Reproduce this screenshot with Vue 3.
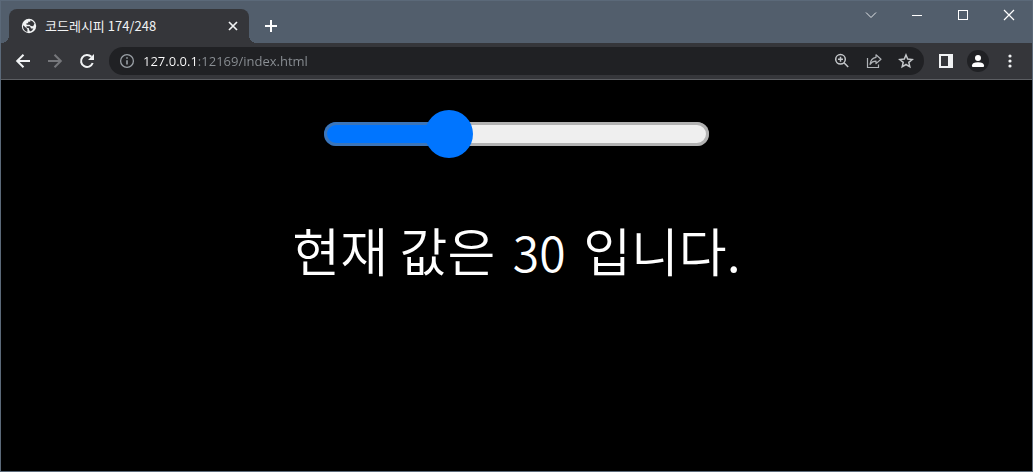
<script setup>
import { ref, computed } from 'vue'

const tabTitle = ref('코드레시피 174/248')
const address = ref('127.0.0.1:12169/index.html')
const value = ref(30)
const fill = computed(() => ({ '--ratio': value.value / 100 }))
</script>

<template>
  <div class="window">
    <header class="titlebar">
      <div class="tab">
        <svg class="globe" width="16" height="16" viewBox="0 0 16 16" aria-hidden="true">
          <circle cx="8" cy="8" r="7.2" fill="#f1f3f4" />
          <path d="M2.2 7.2 L6.4 11 V14 Q2.2 12.8 2 8.5 Z M9.4 2.3 Q12.4 3 13.5 5.6 L12.2 8.2 L9.8 8 L8.6 6.8 H5.6 L5.4 5.2 H7.2 V3.8 H9.2 Z M5.4 8.2 H9 L10 10.4 H12.4 Q11.4 12.6 9 13.5 L8 11.6 V10.2 L5.6 9.8 Z" fill="#35363a" />
        </svg>
        <span class="tab-title">{{ tabTitle }}</span>
        <button class="icon-button tab-close" type="button" aria-label="탭 닫기">
          <svg width="16" height="16" viewBox="0 0 16 16"><path d="M4 4 L12 12 M12 4 L4 12" stroke="#f1f3f4" stroke-width="1.7" /></svg>
        </button>
      </div>
      <button class="icon-button new-tab" type="button" aria-label="새 탭">
        <svg width="16" height="16" viewBox="0 0 16 16"><path d="M2 8 H14 M8 2 V14" stroke="#fff" stroke-width="2" /></svg>
      </button>
      <div class="controls">
        <button class="icon-button" type="button" aria-label="탭 검색">
          <svg width="12" height="12" viewBox="0 0 12 12"><path d="M1 3.5 L6 8.5 L11 3.5" fill="none" stroke="#e4e7ea" /></svg>
        </button>
        <button class="icon-button" type="button" aria-label="최소화">
          <svg width="12" height="12" viewBox="0 0 12 12"><path d="M1 6.5 H11" stroke="#fff" /></svg>
        </button>
        <button class="icon-button" type="button" aria-label="최대화">
          <svg width="12" height="12" viewBox="0 0 12 12"><rect x="1.5" y="1.5" width="9" height="9" fill="none" stroke="#fff" /></svg>
        </button>
        <button class="icon-button" type="button" aria-label="닫기">
          <svg width="12" height="12" viewBox="0 0 12 12"><path d="M1 1 L11 11 M11 1 L1 11" stroke="#fff" stroke-width="1.2" /></svg>
        </button>
      </div>
    </header>

    <nav class="toolbar">
      <button class="icon-button tool" type="button" aria-label="뒤로">
        <svg width="16" height="16" viewBox="0 0 16 16"><path d="M15 8 H2.5 M8.5 1.7 L2.2 8 L8.5 14.3" fill="none" stroke="#f1f3f4" stroke-width="2" /></svg>
      </button>
      <button class="icon-button tool" type="button" aria-label="앞으로">
        <svg width="16" height="16" viewBox="0 0 16 16"><path d="M1 8 H13.5 M7.5 1.7 L13.8 8 L7.5 14.3" fill="none" stroke="#76777b" stroke-width="2" /></svg>
      </button>
      <button class="icon-button tool" type="button" aria-label="새로고침">
        <svg width="16" height="16" viewBox="0 0 16 16"><path d="M13.7 10 A6 6 0 1 1 12.4 3.8" fill="none" stroke="#f1f3f4" stroke-width="2" /><path d="M15 1 V7 H9 Z" fill="#f1f3f4" /></svg>
      </button>
      <div class="omnibox">
        <button class="icon-button info" type="button" aria-label="사이트 정보">
          <svg width="16" height="16" viewBox="0 0 16 16"><circle cx="8" cy="8" r="6.4" fill="none" stroke="#9aa0a6" stroke-width="1.3" /><path d="M8 7.2 V11.5 M8 4.2 V5.8" stroke="#9aa0a6" stroke-width="1.6" /></svg>
        </button>
        <input v-model="address" class="address" type="text" aria-label="주소창" spellcheck="false" />
        <button class="icon-button tool" type="button" aria-label="확대/축소">
          <svg width="16" height="16" viewBox="0 0 16 16"><circle cx="6.5" cy="6.3" r="4.8" fill="none" stroke="#c4c7ca" stroke-width="1.5" /><path d="M10 9.8 L14.2 14 M4 6.3 H9 M6.5 3.8 V8.8" stroke="#c4c7ca" stroke-width="1.5" /></svg>
        </button>
        <button class="icon-button tool" type="button" aria-label="공유">
          <svg width="16" height="16" viewBox="0 0 16 16"><path d="M1.5 5 V14.5 H12.5 V11.5" fill="none" stroke="#b0b3b7" stroke-width="1.2" /><path d="M10 1.8 L15 6.2 L10 10.6 V8.1 Q6.3 8 4 11.3 Q4.8 5.2 10 4.3 Z" fill="none" stroke="#b0b3b7" stroke-width="1.2" stroke-linejoin="round" /></svg>
        </button>
        <button class="icon-button tool" type="button" aria-label="북마크">
          <svg width="16" height="16" viewBox="0 0 16 16"><path d="M8 2 L9.7 6.1 L14.2 6.5 L10.8 9.4 L11.8 13.8 L8 11.5 L4.2 13.8 L5.2 9.4 L1.8 6.5 L6.3 6.1 Z" fill="none" stroke="#c4c7ca" stroke-width="1.5" /></svg>
        </button>
      </div>
      <button class="icon-button tool" type="button" aria-label="측면 패널">
        <svg width="16" height="16" viewBox="0 0 16 16"><path d="M1 1 H15 V15 H1 Z M3 3 V13 H10 V3 Z" fill="#f1f3f4" fill-rule="evenodd" /></svg>
      </button>
      <button class="icon-button tool profile" type="button" aria-label="프로필">
        <svg width="16" height="16" viewBox="0 0 16 16"><circle cx="8" cy="5" r="3" fill="#fff" /><path d="M2 14 V12.2 Q2.4 9.3 8 9.2 Q13.6 9.3 14 12.2 V14 Z" fill="#fff" /></svg>
      </button>
      <button class="icon-button tool" type="button" aria-label="메뉴">
        <svg width="16" height="16" viewBox="0 0 16 16" fill="#f1f3f4"><circle cx="8" cy="3" r="1.6" /><circle cx="8" cy="8" r="1.6" /><circle cx="8" cy="13" r="1.6" /></svg>
      </button>
    </nav>

    <main class="page">
      <input id="amount" v-model.number="value" class="slider" type="range" min="0" max="100" :style="fill" />
      <label class="message" for="amount">현재 값은 <span class="number">{{ value }}</span> 입니다.</label>
    </main>
  </div>
</template>

<style>
html,
body,
#app {
  height: 100%;
  background: #000;
}
</style>

<style scoped>
.window {
  box-sizing: border-box;
  display: flex;
  flex-direction: column;
  min-height: 100%;
  border: 1px solid #5b6979;
  background: #000;
  font-family: "Open Sans", "Noto Sans CJK KR", sans-serif;
}

.icon-button {
  display: flex;
  align-items: center;
  justify-content: center;
  flex: none;
  padding: 0;
  border: 0;
  background: none;
}

.titlebar {
  display: flex;
  align-items: flex-end;
  height: 42px;
  padding-left: 8px;
  background: #525e6c;
}

.tab {
  position: relative;
  box-sizing: border-box;
  display: flex;
  align-items: center;
  gap: 8px;
  width: 240px;
  height: 34px;
  padding: 0 8px 0 12px;
  border-radius: 8px 8px 0 0;
  background: #35363a;
}

.tab::before,
.tab::after {
  content: "";
  position: absolute;
  bottom: 0;
  width: 8px;
  height: 8px;
}

.tab::before {
  right: 100%;
  background: radial-gradient(circle at 0 0, transparent 8px, #35363a 8px);
}

.tab::after {
  left: 100%;
  background: radial-gradient(circle at 100% 0, transparent 8px, #35363a 8px);
}

.tab-title {
  flex: 1;
  color: #f1f3f4;
  font-family: "Noto Sans CJK KR", sans-serif;
  font-size: 13px;
  line-height: 16px;
  white-space: nowrap;
}

.new-tab {
  width: 28px;
  height: 34px;
  margin-left: 8px;
}

.controls {
  display: flex;
  align-self: flex-start;
  margin-left: auto;
}

.controls .icon-button {
  width: 46px;
  height: 28px;
}

.toolbar {
  display: flex;
  align-items: center;
  height: 36px;
  padding: 0 6px;
  border-bottom: 1px solid #5c5e62;
  background: #35363a;
}

.tool {
  width: 32px;
  height: 28px;
}

.omnibox {
  display: flex;
  align-items: center;
  flex: 1;
  min-width: 0;
  height: 28px;
  margin: 0 6px;
  padding: 0 2px 0 10px;
  border-radius: 14px;
  background: #202124;
}

.info {
  width: 16px;
  height: 28px;
}

.address {
  flex: 1;
  min-width: 0;
  height: 20px;
  margin-left: 8px;
  padding: 0;
  border: 0;
  outline: 0;
  background: linear-gradient(to right, #fff 55px, #8b9095 55px);
  background-clip: text;
  color: transparent;
  caret-color: #fff;
  font-family: inherit;
  font-size: 13px;
}

.profile svg {
  padding: 3px;
  border-radius: 50%;
  background: #202124;
}

.page {
  display: flex;
  flex-direction: column;
  align-items: center;
  flex: 1;
  padding: 30px 24px;
}

.slider {
  appearance: none;
  width: 385px;
  max-width: 100%;
  height: 48px;
  margin: 0;
  background: none;
}

.slider::-webkit-slider-runnable-track {
  height: 24px;
  border-radius: 12px;
  background: linear-gradient(
    to right,
    #0075ff calc(24px + (100% - 48px) * var(--ratio)),
    #efefef calc(24px + (100% - 48px) * var(--ratio))
  );
  box-shadow: inset 0 0 0 3px rgba(118, 118, 118, 0.5);
}

.slider::-webkit-slider-thumb {
  appearance: none;
  width: 48px;
  height: 48px;
  margin-top: -12px;
  border-radius: 50%;
  background: #0075ff;
}

.message {
  margin-top: 56px;
  color: #fff;
  font-family: "Noto Sans CJK KR", sans-serif;
  font-size: 52px;
  font-weight: 350;
  line-height: 72px;
  text-align: center;
}

.number {
  margin: 0 6px;
  font-size: 48px;
}
</style>
